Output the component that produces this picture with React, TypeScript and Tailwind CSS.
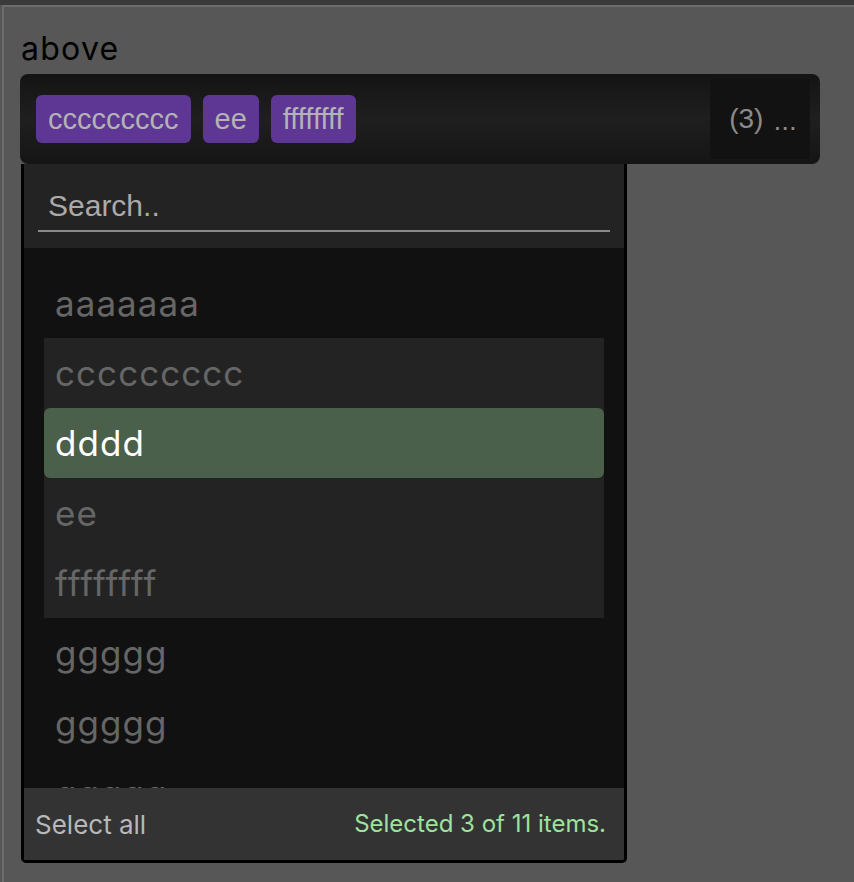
import { useState } from "react";

/* ─── data ───────────────────────────────────────── */
// only the rows that fit the list window are rendered; the count says 11
const ITEMS = [
  "aaaaaaa",
  "ccccccccc",
  "dddd",
  "ee",
  "ffffffff",
  "ggggg",
  "ggggg",
  "ggggg",
];

const SELECTED = ["ccccccccc", "ee", "ffffffff"];

const ROUND = { fontFamily: "Inter, 'Noto Sans', sans-serif" };
const ARIAL = { fontFamily: "'Liberation Sans', Arial, sans-serif" };

/* ─── chip ───────────────────────────────────────── */
function Chip({ label }: { label: string }) {
  return (
    <div
      className="h-[48px] px-3 rounded-md bg-[#5e3794] text-[#b3b3b3] text-[29px] flex items-center leading-none"
      style={ARIAL}
    >
      {label}
    </div>
  );
}

/* ─── option row ─────────────────────────────────── */
function Option({
  label,
  selected,
  active,
}: {
  label: string;
  selected: boolean;
  active: boolean;
}) {
  return (
    <div className={selected || active ? "bg-[#232323]" : ""}>
      <div
        className={
          "h-[70px] flex items-center px-[11px] text-[35px] tracking-[0.03em] " +
          (active ? "bg-[#4a604a] rounded-md text-white" : "text-[#666666]")
        }
        style={ROUND}
      >
        {label}
      </div>
    </div>
  );
}

/* ─── MAIN ───────────────────────────────────────── */
export default function App() {
  const [query, setQuery] = useState("");
  const active = 2;

  return (
    <div className="h-[882px] overflow-hidden bg-[#575757]">
      <div className="h-[5px] bg-[#3b3b3b]" />
      <div className="ml-[2px] h-[877px] border-l-2 border-t-2 border-[#6c6c6c] pl-[16px] pt-[26px]">
        <div className="text-[32px] leading-none text-black pl-[1px] tracking-[0.04em]" style={ROUND}>
          above
        </div>

        <div className="mt-[9px] w-[800px]">
          {/* select box */}
          <div className="h-[90px] rounded-lg bg-gradient-to-b from-[#141414] via-[#1f1f1f] to-[#151515] flex items-center pl-4 pr-[10px]">
            <div className="flex-1 flex items-center gap-3">
              {SELECTED.map((s) => (
                <Chip key={s} label={s} />
              ))}
            </div>
            <div
              className="w-[100px] h-[80px] bg-[#121212] flex items-center justify-center gap-[10px] pl-[6px] text-[#8a8a8a]"
              style={ARIAL}
            >
              <span className="text-[28px] leading-none">(3)</span>
              <span className="text-[28px] leading-none pt-[4px]">...</span>
            </div>
          </div>

          {/* dropdown */}
          <div className="ml-[1px] w-[606px] border-[3px] border-t-0 border-black rounded-b-[5px] overflow-hidden">
            <div className="h-[84px] bg-[#232323] px-[14px] pt-[20px]">
              <input
                value={query}
                onChange={(e) => setQuery(e.target.value)}
                placeholder="Search.."
                className="w-full h-[48px] bg-transparent border-b-2 border-[#8a8a8a] px-[10px] pb-[2px] text-[30px] text-[#bbbbbb] placeholder:text-[#aaaaaa] outline-none"
                style={ARIAL}
              />
            </div>

            <div className="h-[540px] overflow-hidden bg-[#111111] px-5 pt-5">
              {ITEMS.map((it, i) => (
                <Option
                  key={i}
                  label={it}
                  selected={SELECTED.includes(it)}
                  active={i === active}
                />
              ))}
            </div>

            <div
              className="h-[72px] bg-[#333333] flex items-center justify-between pl-[11px] pr-[18px] text-[26px]"
              style={ROUND}
            >
              <span className="text-[#b8b8b8]">Select all</span>
              <span className="text-[#9ee29e] text-[24px]">Selected 3 of 11 items.</span>
            </div>
          </div>
        </div>
      </div>
    </div>
  );
}
